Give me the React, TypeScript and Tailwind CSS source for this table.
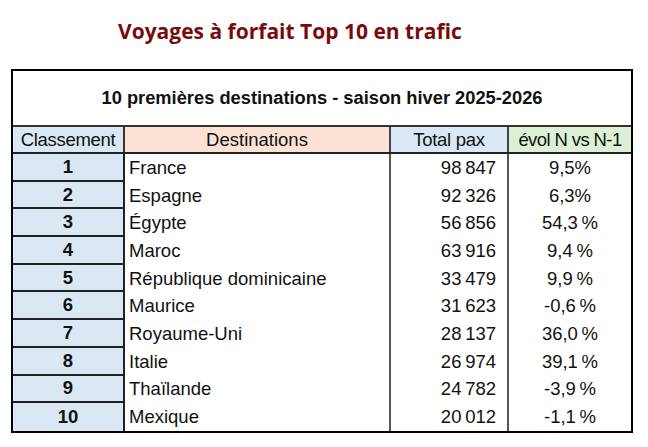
const rows = [
  { rank: 1, dest: 'France', pax: '98\u202f847', evol: '9,5%' },
  { rank: 2, dest: 'Espagne', pax: '92\u202f326', evol: '6,3%' },
  { rank: 3, dest: 'Égypte', pax: '56\u202f856', evol: '54,3\u202f%' },
  { rank: 4, dest: 'Maroc', pax: '63\u202f916', evol: '9,4\u202f%' },
  { rank: 5, dest: 'République dominicaine', pax: '33\u202f479', evol: '9,9\u202f%' },
  { rank: 6, dest: 'Maurice', pax: '31\u202f623', evol: '-0,6\u202f%' },
  { rank: 7, dest: 'Royaume-Uni', pax: '28\u202f137', evol: '36,0\u202f%' },
  { rank: 8, dest: 'Italie', pax: '26\u202f974', evol: '39,1\u202f%' },
  { rank: 9, dest: 'Thaïlande', pax: '24\u202f782', evol: '-3,9\u202f%' },
  { rank: 10, dest: 'Mexique', pax: '20\u202f012', evol: '-1,1\u202f%' },
]

function App() {
  return (
    <div className="w-[648px] h-[447px] bg-white overflow-hidden">
      <h1 className="pt-[19px] pl-[118px] text-[21px] leading-[24px] font-bold text-[#7a0b0b] font-['Open_Sans',sans-serif]">
        Voyages à forfait Top 10 en trafic
      </h1>
      <div className="mt-[26px] ml-[11px] w-[622px] border-2 border-black font-['Liberation_Sans',Arial,sans-serif] text-[18.5px] leading-[20px] text-[#111]">
        <div className="h-[56px] flex items-center justify-center border-b-2 border-[#333] text-[18.3px] font-bold">
          10 premières destinations - saison hiver 2025-2026
        </div>
        <div className="grid grid-cols-[112px_266px_118px_1fr] h-[27px] border-b-2 border-[#222]">
          <div className="bg-[#dae8f5] border-r-2 border-[#333] flex items-center justify-center tracking-[-0.3px]">Classement</div>
          <div className="bg-[#fbe2d5] border-r-2 border-[#444] flex items-center justify-center">Destinations</div>
          <div className="bg-[#dae8f5] border-r-2 border-[#444] flex items-center justify-center tracking-[-0.3px]">Total pax</div>
          <div className="bg-[#ddf0d5] flex items-center justify-center tracking-[-0.6px]">évol N vs N-1</div>
        </div>
        {rows.map((r, i) => (
          <div key={r.rank} className="grid grid-cols-[112px_266px_118px_1fr] h-[27.7px]">
            <div
              className={
                i < rows.length - 1
                  ? 'bg-[#dae8f5] border-r-2 border-b-2 border-[#222] flex items-center justify-center font-bold'
                  : 'bg-[#dae8f5] border-r-2 border-[#222] flex items-center justify-center font-bold'
              }
            >
              {r.rank}
            </div>
            <div className="border-r-2 border-[#555] flex items-center pl-[4px]">{r.dest}</div>
            <div className="border-r-2 border-[#555] flex items-center justify-end pr-[11px]">{r.pax}</div>
            <div className="flex items-center justify-center">{r.evol}</div>
          </div>
        ))}
      </div>
    </div>
  )
}

export default App
